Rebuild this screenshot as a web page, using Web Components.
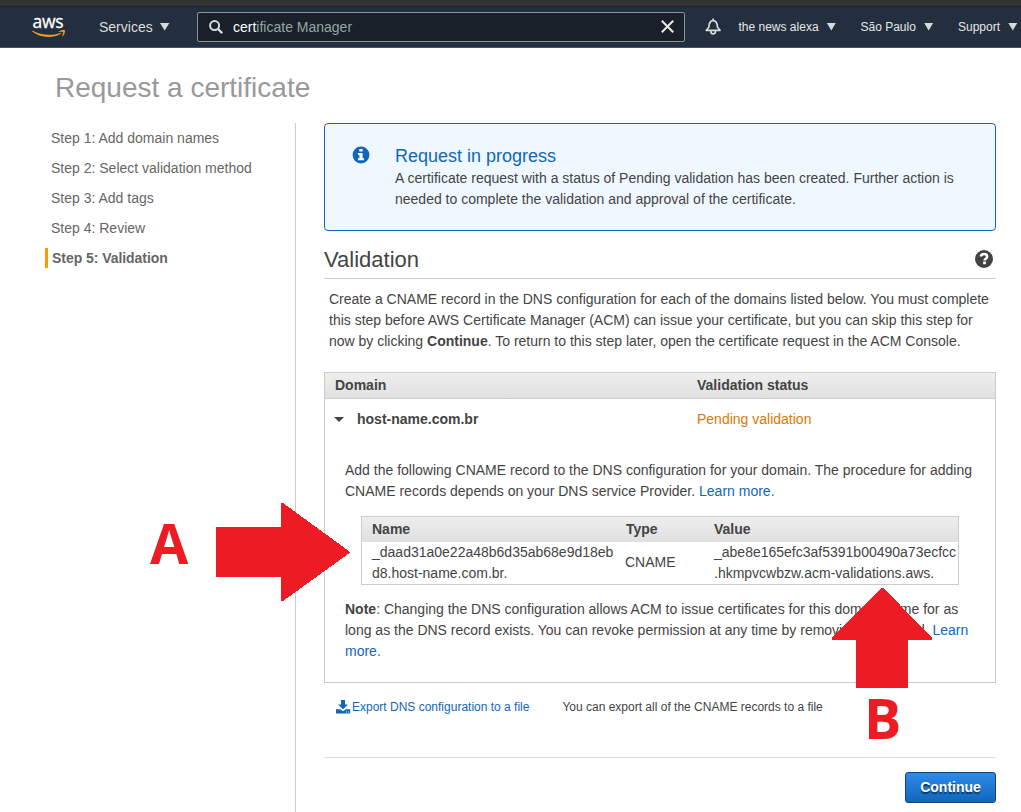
<!DOCTYPE html>
<html lang="en">
<head>
<meta charset="utf-8">
<title>Request a certificate</title>
<style>
html,body{margin:0;height:812px;overflow:hidden;background:#fff}
body{font:14px/21px "Liberation Sans",Arial,sans-serif;color:#444}
</style>
</head>
<body>
<acm-app></acm-app>
<script>
const define = (name, html) => customElements.define(name, class extends HTMLElement {
  constructor() {
    super();
    const t = document.createElement('template');
    t.innerHTML = html;
    this.attachShadow({mode: 'open'}).append(t.content.cloneNode(true));
  }
});

define('aws-logo', `
<style>
:host{display:block;width:34px;height:24px;position:relative}
span{display:block;width:32px;font:500 17.500px/16px "Open Sans","Noto Sans",sans-serif;color:#fff;letter-spacing:-.2px;text-align:center;margin-top:-2px;-webkit-text-stroke:.3px #fff}
svg{position:absolute;left:0;top:15px}
</style>
<span>aws</span>
<svg width="34" height="8" viewBox="0 0 34 8" fill="#f79a1c"><path d="M.3 1.1C.5.7.9.8 1.300 1 10 5.600 20.500 5.800 28.300 2.900c.7-.3 1.200.4.5.9C20.500 8.600 8.500 8 .5 1.800.3 1.600.2 1.300.3 1.100z"/><path d="M26.500 1.700C28.500.1 31.500-.3 32.700.2c.8.6-.1 4.300-2.100 6-.3.2-.6.1-.5-.3.5-1.100 1.300-3.400 1-3.900-.4-.5-2.800-.2-4.200 0-.4 0-.6-.1-.4-.3z"/></svg>`);

define('nav-menu', `
<style>
:host{display:flex;align-items:center;color:#ddd;white-space:nowrap}
i{width:var(--tri,10px);height:8px;background:#d5dbdb;clip-path:polygon(0 0,100% 0,50% 100%);margin-left:var(--gap,8px)}
</style>
<slot></slot><i></i>`);

define('nav-search', `
<style>
:host{display:flex;align-items:center;box-sizing:border-box;width:488px;height:30px;border:1px solid #879596;border-radius:2px;background:#1a2029;padding:0 10px 0 11px;color:#95a5a6}
b{font-weight:400;color:#fff}
span{margin-left:10px;flex:1;white-space:pre}
svg{display:block}
</style>
<svg width="14" height="14" viewBox="0 0 14 14" fill="none" stroke="#d5dbdb" stroke-width="2"><circle cx="5.600" cy="5.600" r="4.500"/><path d="M9 9l4.200 4.200" stroke-width="2.300"/></svg>
<span><b>cert</b>ificate Manager</span>
<svg width="13" height="13" viewBox="0 0 13 13" stroke="#e6eaea" stroke-width="2"><path d="M.8.800l11.400 11.400M12.200.800L.8 12.200"/></svg>`);

define('aws-nav', `
<style>
:host{display:flex;align-items:center;box-sizing:border-box;height:48px;border-top:6px solid #333;border-bottom:1px solid #4a5461;background:#232f3e;box-shadow:inset 0 1px #1f2630;padding-left:32px;line-height:20px}
.sv{margin-left:33px;width:98px;--gap:7px}
.bell{margin-left:20px;width:17px;flex:none}
.s{font-size:12px;flex:none;color:#e4e6e7;--tri:9.500px}
.a{margin-left:16.500px;width:122px}.b{width:97.500px}.c{width:60px}
</style>
<aws-logo></aws-logo>
<nav-menu class="sv">Services</nav-menu>
<nav-search></nav-search>
<svg class="bell" width="17" height="17" viewBox="0 0 17 17" fill="none" stroke="#d5dbdb" stroke-width="1.700"><path d="M1.300 12.300h13.700l-2.500-3C12.200 4.500 11 2.600 8.100 2.600S4.100 4.500 3.800 9.300z" stroke-linejoin="round"/><path d="M5.900 12.500v1c0 3.200 4.500 3.200 4.500 0v-1M8.100.5v2"/></svg>
<nav-menu class="s a">the news alexa</nav-menu>
<nav-menu class="s b">São Paulo</nav-menu>
<nav-menu class="s c">Support</nav-menu>`);

define('wizard-step', `
<style>
:host{display:block;height:20px;line-height:20px;margin-bottom:10px;padding-left:6px;color:#666;white-space:nowrap}
:host([active]){font-weight:700;padding-left:4px;border-left:3px solid #f90;letter-spacing:-.05px}
</style><slot></slot>`);

define('wizard-steps', `
<style>
:host{display:block;box-sizing:border-box;width:251px;border-right:1px solid #ccc;padding-top:5px;height:689px}
</style><slot></slot>`);

define('info-alert', `
<style>
:host{display:flex;box-sizing:border-box;height:108px;border:1px solid #1166bb;border-radius:4px;background:#f0f8ff;padding:21px 27px}
svg{flex:none;margin:1px 25px 0 0}
h2{font:400 18px/22px "Liberation Sans",Arial,sans-serif;color:#1166bb;margin:0 0 1px}
div{white-space:nowrap}
</style>
<svg width="18" height="18" viewBox="0 0 18 18"><circle cx="9" cy="9" r="8.400" fill="#1166bb"/><path d="M7.300 3h3.300v2.600H7.300zM6 7h4.600v5.200h1.400v2H6v-2h1.400V9H6z" fill="#fff"/></svg>
<div><h2><slot name="title"></slot></h2><slot></slot></div>`);

define('section-head', `
<style>
:host{display:flex;justify-content:space-between;align-items:center;box-sizing:border-box;height:48px;border-bottom:1px solid #ccc;padding:10px 3px 0 0;font-size:22px;line-height:30px}
svg{margin-top:-2px}
</style><slot></slot>
<svg width="18" height="18" viewBox="0 0 19 19"><circle cx="9.500" cy="9.500" r="9.500" fill="#444"/><path d="M6.100 6.900C6.500 5.200 7.800 4.300 9.500 4.300c1.900 0 3.300 1.100 3.300 2.700 0 2.300-2.700 2.100-2.700 4" fill="none" stroke="#fff" stroke-width="2.600"/><path d="M8.600 12.200h2.900v2.800H8.600z" fill="#fff"/></svg>`);

define('a-link', `<style>:host{color:#1166bb}</style><slot></slot>`);

define('dns-record', `
<style>
:host{display:grid;box-sizing:border-box;width:598px;border:1px solid #ccc;grid-template:25px 42px/253px 89px 1fr;line-height:21px;white-space:nowrap}
div{padding-left:10px}
.h{background:linear-gradient(#eee,#e0e0e0);font-weight:700;line-height:24px}
</style>
<div class="h">Name</div><div class="h" style="padding-left:11px">Type</div><div class="h">Value</div>
<div>_daad31a0e22a48b6d35ab68e9d18eb<br>d8.host-name.com.br.</div><div style="line-height:40px">CNAME</div><div>_abe8e165efc3af5391b00490a73ecfcc<br>.hkmpvcwbzw.acm-validations.aws.</div>`);

define('domain-table', `
<style>
:host{display:block;box-sizing:border-box;height:311px;border:1px solid #ccc;white-space:nowrap}
.r{display:grid;grid-template-columns:362px 1fr;padding-left:10px}
.h{height:25px;line-height:24px;font-weight:700;background:linear-gradient(#eee,#e0e0e0);border-bottom:1px solid #ccc}
.d{line-height:20px;margin-top:10px}
.d b{display:flex;align-items:center}
i{border:5px solid transparent;border-top-color:#444;border-bottom:0;margin:1px 13px 0 -1px}
.p{color:#e07700}
.body{padding:31px 0 0 20px}
dns-record{margin:14px 0 14px 16px}
</style>
<div class="r h"><span>Domain</span><span>Validation status</span></div>
<div class="r d"><b><i></i>host-name.com.br</b><span class="p">Pending validation</span></div>
<div class="body">Add the following CNAME record to the DNS configuration for your domain. The procedure for adding<br>CNAME records depends on your DNS service Provider. <a-link>Learn more.</a-link>
<dns-record></dns-record>
<b>Note</b>: Changing the DNS configuration allows ACM to issue certificates for this domain name for as<br>long as the DNS record exists. You can revoke permission at any time by removing the record. <a-link>Learn<br>more.</a-link></div>`);

define('export-row', `
<style>
:host{display:flex;align-items:center;height:20px;margin-top:14px;padding-left:12px;font-size:12px;line-height:20px;white-space:nowrap}
a-link{margin-left:1px}
span{margin-left:33px}
</style>
<svg width="15" height="14" viewBox="0 0 15 14" fill="#1166bb"><path d="M5 0h4v4.500h3L7 9.200 2 4.500h3z"/><path fill-rule="evenodd" d="M0 9.300h4.200L7 11.200l2.800-1.900H14.200v4.200H0zM10 11.500h.9v.9H10zM12 11.500h.9v.9H12z"/></svg>
<a-link>Export DNS configuration to a file</a-link><span>You can export all of the CNAME records to a file</span>`);

define('primary-button', `
<style>
:host{display:block;box-sizing:border-box;width:91px;height:31px;border:1px solid #114477;border-radius:3px;background:linear-gradient(#2f8be8,#1166bb);color:#fff;font-weight:700;text-align:center;line-height:28px;text-shadow:0 2px 1px #0a3560}
</style><slot></slot>`);

define('mark-arrow', `
<style>
:host{display:block;position:absolute;pointer-events:none}
svg{display:block}
.up{display:none}
:host([up]) .up{display:block}
:host([up]) .right{display:none}
</style>
<svg class="right" width="134" height="99" fill="#ed1c24" shape-rendering="crispEdges"><path d="M0 24h65V0h2l66.500 48.500v1.500L67 98h-2V74H0z"/></svg>
<svg class="up" width="101" height="100" fill="#ed1c24" shape-rendering="crispEdges"><path d="M49.500 0h2L100 50v2H76v48H24V52H0v-2z"/></svg>`);

define('mark-letter', `
<style>
:host{display:block;position:absolute;color:#ed1c24;font:700 55.500px/60px "Open Sans","Noto Sans",sans-serif}
</style><slot></slot>`);

define('acm-app', `
<style>
:host{display:block;position:relative;height:812px;overflow:hidden}
h1{font:400 28px/36px "Liberation Sans",Arial,sans-serif;color:#999;margin:22px 0 17px 55px}
.cols{display:flex;padding:0 25px 0 45px}
main{width:672px;margin-left:28px}
.intro{padding:10px 0 0 5px;height:83px;white-space:nowrap}
.foot{display:flex;justify-content:flex-end;border-top:1px solid #ddd;margin-top:40px;padding-top:14px}
</style>
<aws-nav></aws-nav>
<h1>Request a certificate</h1>
<div class="cols">
<wizard-steps>
<wizard-step>Step 1: Add domain names</wizard-step><wizard-step>Step 2: Select validation method</wizard-step><wizard-step>Step 3: Add tags</wizard-step><wizard-step>Step 4: Review</wizard-step><wizard-step active>Step 5: Validation</wizard-step>
</wizard-steps>
<main>
<info-alert><span slot="title">Request in progress</span>A certificate request with a status of Pending validation has been created. Further action is<br>needed to complete the validation and approval of the certificate.</info-alert>
<section-head>Validation</section-head>
<div class="intro">Create a CNAME record in the DNS configuration for each of the domains listed below. You must complete<br>this step before AWS Certificate Manager (ACM) can issue your certificate, but you can skip this step for<br>now by clicking <b>Continue</b>. To return to this step later, open the certificate request in the ACM Console.</div>
<domain-table></domain-table>
<export-row></export-row>
<div class="foot"><primary-button>Continue</primary-button></div>
</main>
</div>
<mark-arrow style="left:216px;top:503px"></mark-arrow>
<mark-arrow up style="left:832px;top:588px"></mark-arrow>
<mark-letter style="left:150px;top:513px">A</mark-letter>
<mark-letter style="left:864px;top:688px">B</mark-letter>`);
</script>
</body>
</html>
